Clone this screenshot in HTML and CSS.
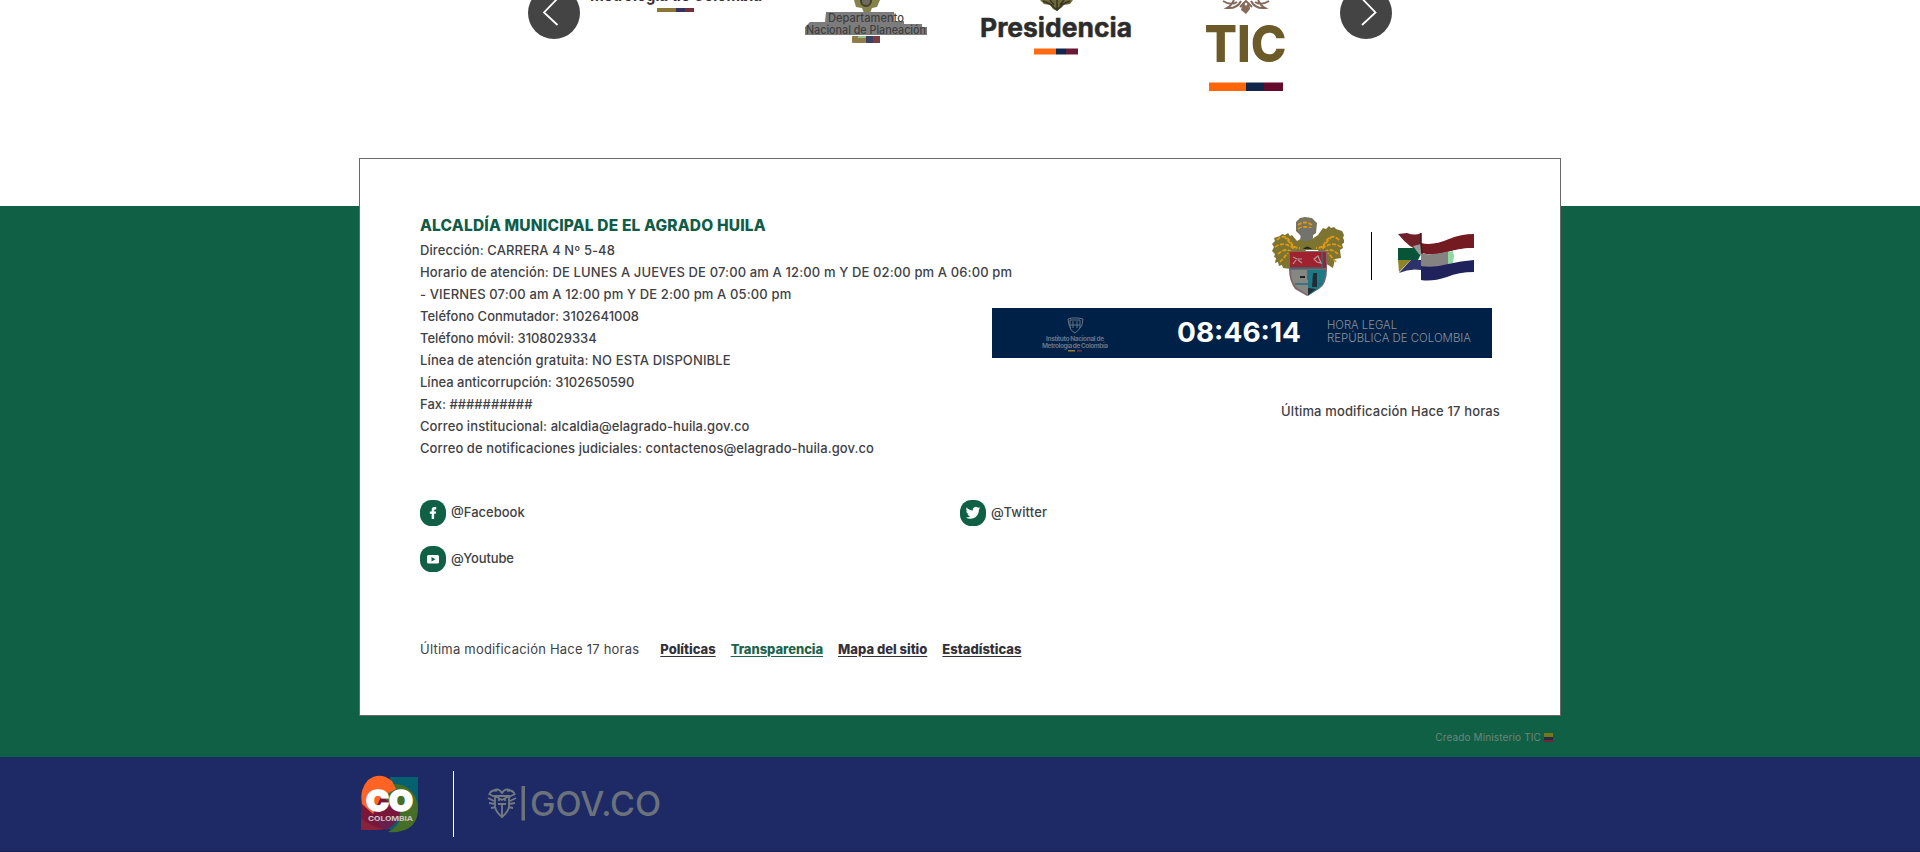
FILE: index.html
```html
<!DOCTYPE html>
<html lang="es">
<head>
<meta charset="utf-8">
<title>Alcaldía Municipal de El Agrado Huila</title>
<link rel="stylesheet" href="styles.css">
</head>
<body>
<section class="carousel">
  <svg class="arrow" width="52" height="39" viewBox="0 0 52 39"><circle cx="26" cy="13" r="26" fill="#444"/><path d="M29.500-1.500L16 12.500 29.500 25" fill="none" stroke="#fff" stroke-width="1.800"/></svg>
  <div class="logos">
    <svg width="176" height="100" viewBox="588 0 176 100">
      <text x="590" y="1" font-size="17" font-weight="700" textLength="172" lengthAdjust="spacingAndGlyphs" fill="#3c3038">Metrología de Colombia</text>
      <path d="M657 8h19v4h-19z" fill="#8a7638"/><path d="M676 8h9v4h-9z" fill="#35305f"/><path d="M685 8h9v4h-9z" fill="#71303c"/>
    </svg>
    <svg width="122" height="100" viewBox="805 0 122 100">
      <path d="M854 0h26l-3 7-5 1-2 5h-6l-2-5-6-1z" fill="#85824b"/><circle cx="866" cy="1" r="5" fill="#716a60" stroke="#444228" stroke-width="2"/>
      <path d="M826 12h68v9h10v3h18v3h5v8H805v-8l5-5h15z" fill="#7c7c7c"/>
      <g fill="#3f3f3f" font-weight="500"><text x="828" y="22" font-size="11.500" textLength="76" lengthAdjust="spacingAndGlyphs">Departamento</text><text x="806" y="34" font-size="11.500" textLength="120" lengthAdjust="spacingAndGlyphs">Nacional de Planeación</text></g>
      <rect x="852" y="36" width="14" height="7" rx="1" fill="#8e7d48"/><path d="M866 36h7v7h-7z" fill="#3c4065"/><path d="M873 36h7v7h-7z" fill="#7b3d42"/><path d="M858 36h8v2h-8z" fill="#91c489"/>
    </svg>
    <svg width="154" height="100" viewBox="979 0 154 100">
      <path d="M1040 0h33l-3 4-6 1-3 3-4 3-4-2-3-4-6-1z" fill="#716939"/><path d="M1043 1l7 3 7 6 6-6 7-3M1057 0v9M1050 0l4 5M1064 0l-4 5" fill="none" stroke="#353624" stroke-width="1.500"/>
      <text x="980" y="37" font-size="26" font-weight="700" textLength="152" lengthAdjust="spacingAndGlyphs" fill="#2c2c2c" stroke="#2c2c2c" stroke-width=".5">Presidencia</text>
      <path d="M1034 48.500h22v6h-22z" fill="#ff6b12"/><path d="M1056 48.500h10v6h-10z" fill="#10264b"/><path d="M1066 48.500h12v6h-12z" fill="#681a36"/>
    </svg>
    <svg width="84" height="100" viewBox="1203 0 84 100">
      <g fill="none" stroke="#83685a" stroke-width="2"><path d="M1223 1q8 5 14 1M1234 0q-3 6-7 8 10 1 14-7M1269 1q-8 5-14 1M1258 0q3 6 7 8-10 1-14-7M1240 7l6-6 6 6"/></g><path d="M1243 2l3 4 3-4 1 7-4 5-5-4z" fill="#886b57"/>
      <text x="1204.500" y="62" font-size="51" font-weight="800" textLength="82" lengthAdjust="spacingAndGlyphs" fill="#6c5b28">TIC</text>
      <path d="M1209 82.500h37v8.500h-37z" fill="#ff6607"/><path d="M1246 82.500h18v8.500h-18z" fill="#10264b"/><path d="M1264 82.500h19v8.500h-19z" fill="#660b2b"/>
    </svg>
  </div>
  <svg class="arrow" width="52" height="39" viewBox="0 0 52 39"><circle cx="26" cy="13" r="26" fill="#444"/><path d="M22-1.500L35.500 12.500 22 25" fill="none" stroke="#fff" stroke-width="1.800"/></svg>
</section>

<footer class="footer">
  <div class="card">
    <div class="top">
      <div class="info">
        <h2><span class="t-title">ALCALDÍA MUNICIPAL DE EL AGRADO HUILA</span></h2>
        <p><span class="t1">Dirección: CARRERA 4 Nº 5-48</span></p>
        <p><span class="t2">Horario de atención: DE LUNES A JUEVES DE 07:00 am A 12:00 m Y DE 02:00 pm A 06:00 pm</span></p>
        <p><span class="t3">- VIERNES 07:00 am A 12:00 pm Y DE 2:00 pm A 05:00 pm</span></p>
        <p><span class="t4">Teléfono Conmutador: 3102641008</span></p>
        <p><span class="t5">Teléfono móvil: 3108029334</span></p>
        <p><span class="t6">Línea de atención gratuita: NO ESTA DISPONIBLE</span></p>
        <p><span class="t7">Línea anticorrupción: 3102650590</span></p>
        <p><span class="t8">Fax: ##########</span></p>
        <p><span class="t9">Correo institucional: alcaldia@elagrado-huila.gov.co</span></p>
        <p><span class="t10">Correo de notificaciones judiciales: contactenos@elagrado-huila.gov.co</span></p>
      </div>
      <div class="side">
        <div class="emblems">
          <svg width="72" height="80" viewBox="0 0 72 80">
            <path d="M24 5l4-4 5-1 7 1 5 5-1 10-4 3 2 9H27l2-9-5-5z" fill="#77735d"/>
            <path d="M25 24l-5-6-2 1-2-3-3 2-3-1-2 2-6 2 1 3-3 3 2 3-2 4 3 3-1 3 2 1-1 5 3-1 1 4 3-1 1 3 8 1 9-8 6-11h12l7 13 8 5 2-9 6-1-1-8 3-2-1-4 3-2-2-4 1-3-2-4-6-2-2-2-3 1-2-2-3 3-3-1-5 7-6 4-8-2z" fill="#7d7431"/>
            <path d="M26 8q7-5 14 0M26 12q7-4 15 0M5 23q7-7 13 1 4 8 10 7M3 30q10-7 20 3M6 37q8-8 16 0M8 45l8-9M12 19l10 12M67 23q-7-7-13 1-4 8-10 7M69 30q-10-7-20 3M66 37q-8-8-16 0M64 45l-8-9M60 19L50 31" fill="none" stroke="#dd9914" stroke-width="1.800" stroke-dasharray="4 1.500"/>
            <path d="M28 11h13v10l-4 3H29z" fill="#73736e"/><path d="M31 32q4-5 9 0z" fill="#262b28"/>
            <path d="M17 34h38v19q0 14-8 19l-12 7-12-7q-6-8-6-20z" fill="#806469"/>
            <path d="M18 35h36v16H18z" fill="#a0222f"/><path d="M19 53h17v25l-11-7q-6-6-6-18z" fill="#858783"/><path d="M36 53h18q-1 13-8 19l-10 7z" fill="#1a7b86"/>
            <path d="M18 51h32V35M23 67h28M36 53v10" fill="none" stroke="#286e7f" stroke-width="1.500"/><path d="M21 40l4 2 5 0M24 43l-3 4M26 43l4 3M42 42l4-3 3 7-4-1z" fill="none" stroke="#b09a98" stroke-width="1.200"/>
            <path d="M41 56h4v14h-5zM36 71l8 1-8 6z" fill="#252b34"/><path d="M28 60h5" stroke="#222" stroke-width="2"/>
          </svg>
          <i class="rule"></i>
          <svg width="78" height="49" viewBox="0 0 78 49">
            <path d="M1 2l9-1q8 3 14 0v18q-11-2-23-17z" fill="#711f28"/><path d="M1 16h20l3 6-3 6H1z" fill="#075438"/><path d="M1 28h13L2 40z" fill="#8d8327"/><path d="M14 28h10v10q-11-2-22 3z" fill="#2d326b"/>
            <path d="M16 14l8-2v12l-3-3z" fill="#999"/><path d="M24 11q12 3 28-4Q64 2 77 2v14q-13 0-26 4-14 4-27 1z" fill="#741b22"/>
            <path d="M24 22q12 2 27-2 13-4 26-4v12q-13 0-26 4-14 4-27 1z" fill="#fff"/><path d="M24 21.500q12 2 27-2v13q-13 4-27 2z" fill="#858282"/><path d="M51 20l5-1 1 5-1 7-5 1z" fill="#91d7a0"/>
            <path d="M24 34q13 2 27-2 13-3 26-4v12q-15 0-27 5-15 5-26 3z" fill="#20235b"/><path d="M24 1v11l1 10" stroke="#3d1821" stroke-width="1.500" fill="none"/>
          </svg>
        </div>
        <svg class="clock" width="500" height="50" viewBox="992 308 500 50">
          <g fill="none" stroke="#657286" stroke-width="1"><path d="M1070 320h10v8q-2 3-5 5-4-2-5-5zM1068 319l4-1h6l5 1-1 6-2 3M1068 319l1 6 2 3M1073 321v7M1077 321v7M1070 325h10"/></g>
          <g fill="#657286" font-weight="700"><text x="1046" y="341" font-size="6.500" textLength="58">Instituto Nacional de</text><text x="1042" y="348" font-size="6.500" textLength="66">Metrología de Colombia</text></g>
          <path d="M1068 350h7v1.500h-7z" fill="#9b7d39"/><path d="M1077 350h5v1.500h-5z" fill="#6e3442"/>
          <text x="1177" y="342" font-size="27" font-weight="700" textLength="124" lengthAdjust="spacingAndGlyphs" fill="#fff">08:46:14</text>
          <g fill="#8b919a" font-size="12" font-weight="300"><text x="1327" y="329" textLength="70" lengthAdjust="spacingAndGlyphs">HORA LEGAL</text><text x="1327" y="342" textLength="144" lengthAdjust="spacingAndGlyphs">REPÚBLICA DE COLOMBIA</text></g>
        </svg>
        <p class="mod"><span class="t11">Última modificación Hace 17 horas</span></p>
      </div>
    </div>
    <div class="social">
      <div class="net"><svg width="26" height="26" viewBox="0 0 26 26"><rect width="26" height="26" rx="11.500" fill="#0f6044"/><path d="M11.700 19v-5.200H9.800v-2.400h1.900v-1.500q0-2.800 2.800-2.800h1.700v2.300h-1.100q-1 0-1 1v1h2l-.3 2.400h-1.700V19z" fill="#fff"/></svg><span class="t12">@Facebook</span></div>
      <div class="net"><svg width="26" height="26" viewBox="0 0 26 26"><rect width="26" height="26" rx="11.500" fill="#0f6044"/><path transform="translate(5.700 5.500) scale(.61)" d="M23.950 4.570a10 10 0 0 1-2.820.77 4.960 4.960 0 0 0 2.160-2.720c-.95.550-2 .960-3.130 1.190a4.920 4.920 0 0 0-8.380 4.480C7.690 8.090 4.070 6.130 1.640 3.160a4.920 4.920 0 0 0 1.520 6.570 4.900 4.900 0 0 1-2.230-.61v.06a4.920 4.920 0 0 0 3.950 4.820 5 5 0 0 1-2.210.08 4.930 4.930 0 0 0 4.600 3.420A9.870 9.870 0 0 1 0 19.540a13.990 13.990 0 0 0 7.550 2.210c9.050 0 14-7.500 14-13.990l-.02-.64a9.940 9.940 0 0 0 2.420-2.550z" fill="#fff"/></svg><span class="t13">@Twitter</span></div>
      <div class="net"><svg width="26" height="26" viewBox="0 0 26 26"><rect width="26" height="26" rx="11.500" fill="#0f6044"/><rect x="7" y="9" width="12" height="8.500" rx="1.500" fill="#fff"/><path d="M11.500 11v4.500l4-2.250z" fill="#0f6044"/></svg><span class="t14">@Youtube</span></div>
    </div>
    <div class="links">
      <span class="t15">Última modificación Hace 17 horas</span>
      <nav><a class="a1">Políticas</a><a class="a2">Transparencia</a><a class="a3">Mapa del sitio</a><a class="a4">Estadísticas</a></nav>
    </div>
  </div>
  <div class="credit"><span>Creado Ministerio TIC</span><i class="mini-flag"></i></div>
</footer>

<div class="gov">
  <svg width="57" height="57" viewBox="0 0 57 57">
    <path d="M29 2h28v29q0 23-24 26L20 50z" fill="#056170"/><path d="M0 18l20-2 19 20q-3 19-22 19H0z" fill="#78173a"/><path d="M0 43q13 12 30 10L16 55H0z" fill="#87243b"/>
    <path d="M22 12q13-7 26 2 9 8 9 20 0 13-9 19-8 5-21 4 14-7 12-20L22 22z" fill="#456f28"/><path d="M1 29Q-2 15 7 5q12-9 24 1l4 8-15 8-8 17z" fill="#ff6425"/><path d="M16 43h20q-3 9-11 12-9-4-9-12z" fill="#67204e"/>
    <text x="5" y="35.500" font-size="29" font-weight="900" textLength="47" lengthAdjust="spacingAndGlyphs" fill="#fff" stroke="#fff" stroke-width="1.500">CO</text><text x="7" y="46" font-size="6.500" font-weight="700" textLength="45" lengthAdjust="spacingAndGlyphs" fill="#cbc4c5">COLOMBIA</text>
  </svg>
  <i class="rule-light"></i>
  <svg width="174" height="36" viewBox="487 785 174 36">
    <g fill="none" stroke="#737a80" stroke-width="1.800"><path d="M495 796h14v10q0 5-7 11-7-6-7-11zM489 794l6 3M488 798l6 3M489 803l6 1M491 808l5-1M515 794l-6 3M516 798l-6 3M515 803l-6 1M513 808l-5-1M494 790q5-2 8 3 3-5 8-3M499 798v3M505 798v3M498 804h8M502 803v15M489 795q2-6 8-4M515 795q-2-6-8-4M495 796l7 4 7-4"/></g>
    <path d="M521.500 786h3.500v34.500h-3.500z" fill="#6b727b"/>
    <text x="530" y="815.500" font-size="34" font-weight="500" textLength="131" lengthAdjust="spacingAndGlyphs" fill="#6b727b">GOV.CO</text>
  </svg>
</div>
</body>
</html>
```
FILE: styles.css
```css
* { box-sizing: border-box; margin: 0; padding: 0; }
body { width: 1920px; height: 852px; overflow: hidden; background: #fff; font-family: "Inter", sans-serif; color: #414145; }
svg { display: block; flex: none; }
.carousel { height: 158px; padding: 0 528px; display: flex; }
.logos { flex: 1; display: flex; padding-left: 8px; }
.logos svg + svg { margin-left: 41px; }
.logos svg:nth-child(3) { margin-left: 52px; }
.logos svg:nth-child(4) { margin-left: 70px; }
.footer { height: 599px; background: linear-gradient(#fff 48px, #0f6044 48px); }
.card { width: 1202px; height: 558px; margin: 0 auto; padding: 57px 60px 0; background: #fff; border: 1px solid #68686c; }
.top { display: flex; justify-content: space-between; height: 284px; font-size: 13px; font-weight: 500; }
.info { width: 560px; flex: none; white-space: nowrap; }
.info h2 { height: 23px; line-height: 20px; font-size: 15.500px; font-weight: 800; color: #0f5c48; letter-spacing: 0.18px; }
.info p { height: 22px; line-height: 22px; }
.t1, .t9, .t10 { letter-spacing: 0.08px; }
.t2, .t3, .t6 { letter-spacing: 0.13px; }
.t5 { letter-spacing: -0.04px; }
.t11 { letter-spacing: 0.15px; }
.t13 { letter-spacing: 0.12px; }
.t14 { letter-spacing: -0.12px; }
.t15 { letter-spacing: 0.22px; }
.side { flex: 1; display: flex; flex-direction: column; align-items: flex-end; }
.emblems { height: 92px; padding-top: 1px; padding-right: 25px; display: flex; align-items: flex-start; }
.rule { width: 1px; height: 48px; margin: 15px 25px 0 27px; background: #000; }
.emblems svg:last-child { margin-top: 15px; }
.clock { background: #002147; margin-right: 8px; }
.mod { margin-top: 42px; line-height: 22px; }
.social { display: grid; grid-template-columns: 540px 540px; grid-auto-rows: 46px; height: 134px; font-size: 13px; font-weight: 500; }
.net { display: flex; gap: 5px; line-height: 24px; }
.links { display: flex; gap: 21px; font-size: 13px; line-height: 31px; white-space: nowrap; }
.links nav { display: flex; gap: 15px; font-weight: 800; }
.links a { text-decoration: underline; text-underline-offset: 2px; color: #343039; }
.links .a2 { color: #20634a; letter-spacing: -0.04px; }
.credit { width: 1202px; margin: 0 auto; padding: 15px 8px 0 0; display: flex; justify-content: flex-end; align-items: center; gap: 3px; font-size: 10px; line-height: 12px; letter-spacing: 0.13px; color: #70847a; }
.mini-flag { width: 9px; height: 9px; background: linear-gradient(#777519 4px, #242b43 4px 7px, #71263a 7px); }
.gov { height: 95px; padding: 0 0 2px 361px; display: flex; align-items: center; background: #1e2a66; border-bottom: 1px solid #17204f; }
.gov svg { overflow: visible; }
.rule-light { width: 1px; height: 66px; margin: 1px 33px 0 35px; background: #fff; }
```
